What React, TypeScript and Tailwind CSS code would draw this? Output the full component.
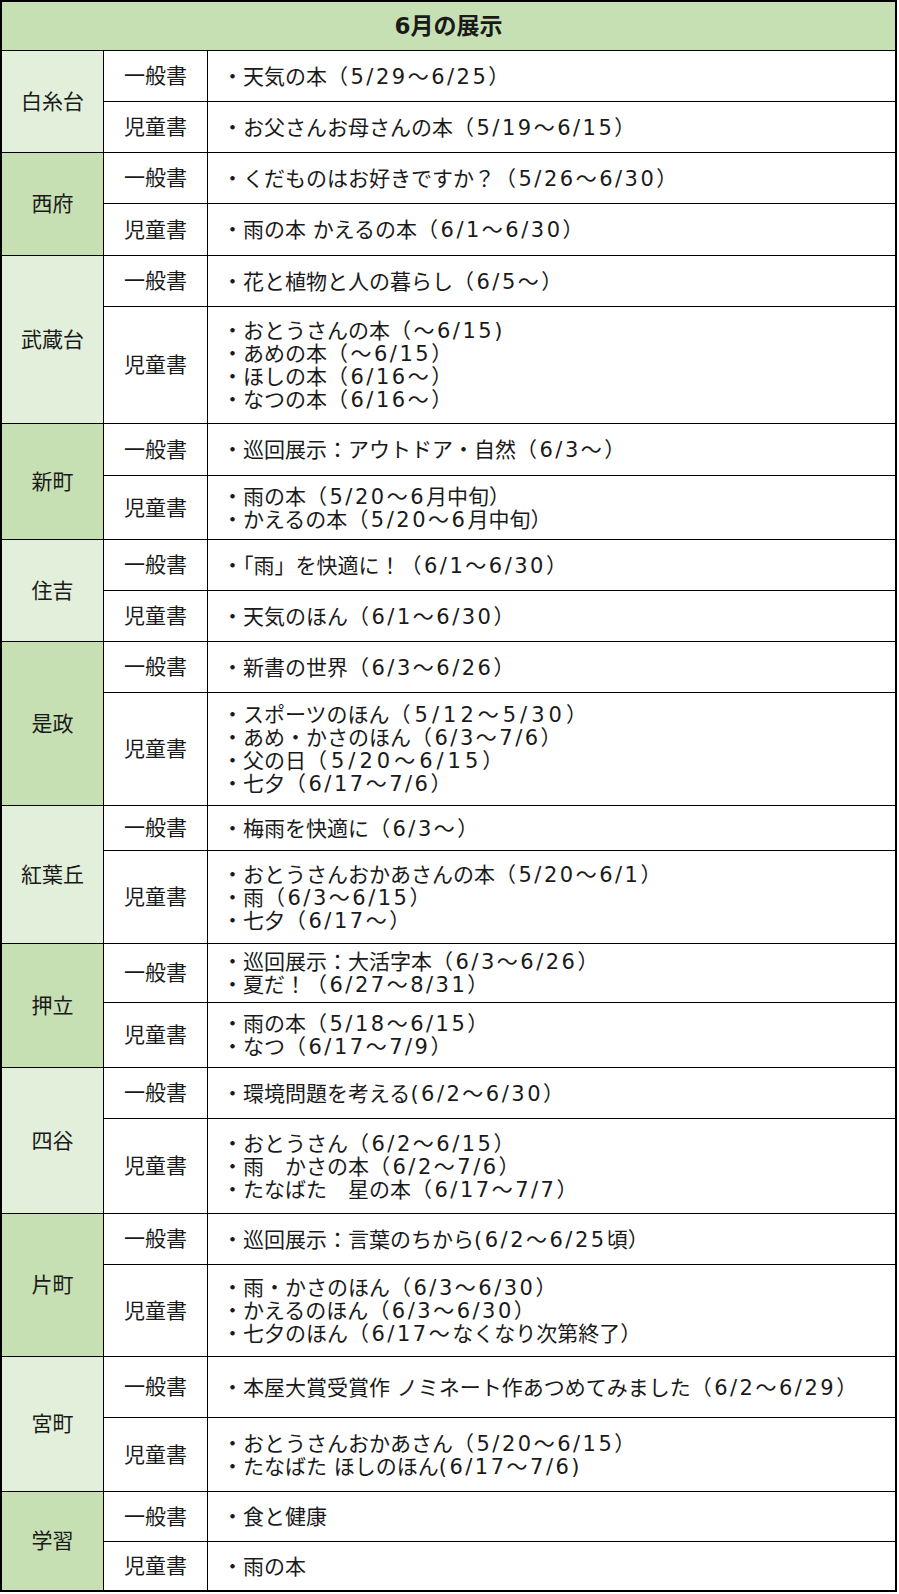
type Row = { label: string; h: string; lines: string[] };
type Branch = { name: string; bg: string; rows: Row[] };

const LIGHT = "bg-[#e2efda]";
const DARK = "bg-[#c6e0b4]";

// 先頭に "*" がある行は日付の字間をさらに広げる
const branches: Branch[] = [
  {
    name: "白糸台",
    bg: LIGHT,
    rows: [
      { label: "一般書", h: "h-[51px]", lines: ["天気の本（5/29〜6/25）"] },
      { label: "児童書", h: "h-[50px]", lines: ["お父さんお母さんの本（5/19〜6/15）"] },
    ],
  },
  {
    name: "西府",
    bg: DARK,
    rows: [
      { label: "一般書", h: "h-[51px]", lines: ["くだものはお好きですか？（5/26〜6/30）"] },
      { label: "児童書", h: "h-[51px]", lines: ["雨の本 かえるの本（6/1〜6/30）"] },
    ],
  },
  {
    name: "武蔵台",
    bg: LIGHT,
    rows: [
      { label: "一般書", h: "h-[51px]", lines: ["花と植物と人の暮らし（6/5〜）"] },
      {
        label: "児童書",
        h: "h-[116px]",
        lines: ["おとうさんの本（〜6/15)", "あめの本（〜6/15）", "ほしの本（6/16〜）", "なつの本（6/16〜）"],
      },
    ],
  },
  {
    name: "新町",
    bg: DARK,
    rows: [
      { label: "一般書", h: "h-[52px]", lines: ["巡回展示：アウトドア・自然（6/3〜）"] },
      { label: "児童書", h: "h-[63px]", lines: ["雨の本（5/20〜6月中旬）", "かえるの本（5/20〜6月中旬）"] },
    ],
  },
  {
    name: "住吉",
    bg: LIGHT,
    rows: [
      { label: "一般書", h: "h-[51px]", lines: ["「雨」を快適に！（6/1〜6/30）"] },
      { label: "児童書", h: "h-[50px]", lines: ["天気のほん（6/1〜6/30）"] },
    ],
  },
  {
    name: "是政",
    bg: DARK,
    rows: [
      { label: "一般書", h: "h-[51px]", lines: ["新書の世界（6/3〜6/26）"] },
      {
        label: "児童書",
        h: "h-[112px]",
        lines: ["*スポーツのほん（5/12〜5/30）", "あめ・かさのほん（6/3〜7/6）", "*父の日（5/20〜6/15）", "七夕（6/17〜7/6）"],
      },
    ],
  },
  {
    name: "紅葉丘",
    bg: LIGHT,
    rows: [
      { label: "一般書", h: "h-[45px]", lines: ["梅雨を快適に（6/3〜）"] },
      {
        label: "児童書",
        h: "h-[92px]",
        lines: ["おとうさんおかあさんの本（5/20〜6/1）", "雨（6/3〜6/15）", "七夕（6/17〜）"],
      },
    ],
  },
  {
    name: "押立",
    bg: DARK,
    rows: [
      { label: "一般書", h: "h-[59px]", lines: ["巡回展示：大活字本（6/3〜6/26）", "夏だ！（6/27〜8/31）"] },
      { label: "児童書", h: "h-[64px]", lines: ["雨の本（5/18〜6/15）", "なつ（6/17〜7/9）"] },
    ],
  },
  {
    name: "四谷",
    bg: LIGHT,
    rows: [
      { label: "一般書", h: "h-[51px]", lines: ["環境問題を考える(6/2〜6/30）"] },
      {
        label: "児童書",
        h: "h-[94px]",
        lines: ["おとうさん（6/2〜6/15）", "雨　かさの本（6/2〜7/6）", "たなばた　星の本（6/17〜7/7）"],
      },
    ],
  },
  {
    name: "片町",
    bg: DARK,
    rows: [
      { label: "一般書", h: "h-[51px]", lines: ["巡回展示：言葉のちから(6/2〜6/25頃）"] },
      {
        label: "児童書",
        h: "h-[91px]",
        lines: ["雨・かさのほん（6/3〜6/30）", "かえるのほん（6/3〜6/30）", "七夕のほん（6/17〜なくなり次第終了）"],
      },
    ],
  },
  {
    name: "宮町",
    bg: LIGHT,
    rows: [
      { label: "一般書", h: "h-[61px]", lines: ["本屋大賞受賞作 ノミネート作あつめてみました（6/2〜6/29）"] },
      { label: "児童書", h: "h-[73px]", lines: ["おとうさんおかあさん（5/20〜6/15）", "たなばた ほしのほん(6/17〜7/6)"] },
    ],
  },
  {
    name: "学習",
    bg: DARK,
    rows: [
      { label: "一般書", h: "h-[50px]", lines: ["食と健康"] },
      { label: "児童書", h: "h-[48px]", lines: ["雨の本"] },
    ],
  },
];

// 日付部分（数字・括弧）は字間を少し広げる
const Line = ({ text }: { text: string }) => {
  const wide = text.startsWith("*");
  const parts = (wide ? text.slice(1) : text).split(/([0-9/〜（）()]+)/);
  return (
    <div className="whitespace-nowrap">
      ・
      {parts.map((p, i) =>
        i % 2 === 1 ? (
          <span key={i} className={wide ? "tracking-[4px]" : "tracking-[2.5px]"}>
            {p}
          </span>
        ) : (
          <span key={i}>{p}</span>
        )
      )}
    </div>
  );
};

export default function App() {
  return (
    <div className="bg-white font-['DejaVu_Sans','Noto_Sans_CJK_JP',sans-serif] text-[21px] text-[#1a1a1a]">
      <div className="w-[897px] border-2 border-black">
        {/* タイトル */}
        <div className="h-[49px] flex items-center justify-center border-b border-black bg-[#c6e0b4] text-[23px] font-semibold">
          6月の展示
        </div>

        {branches.map((b) => (
          <div key={b.name} className="flex border-b border-black last:border-b-0">
            <div className={`w-[102px] shrink-0 border-r border-black flex items-center justify-center pt-[2px] ${b.bg}`}>
              {b.name}
            </div>
            <div className="flex-1 flex flex-col">
              {b.rows.map((r) => (
                <div key={r.label} className={`flex border-b border-black last:border-b-0 ${r.h}`}>
                  <div className="w-[104px] shrink-0 border-r border-black flex items-center justify-center pt-[2px]">
                    {r.label}
                  </div>
                  <div className="flex-1 flex flex-col justify-center pl-[14px] pt-[2px] leading-[23px]">
                    {r.lines.map((t) => (
                      <Line key={t} text={t} />
                    ))}
                  </div>
                </div>
              ))}
            </div>
          </div>
        ))}
      </div>
    </div>
  );
}
